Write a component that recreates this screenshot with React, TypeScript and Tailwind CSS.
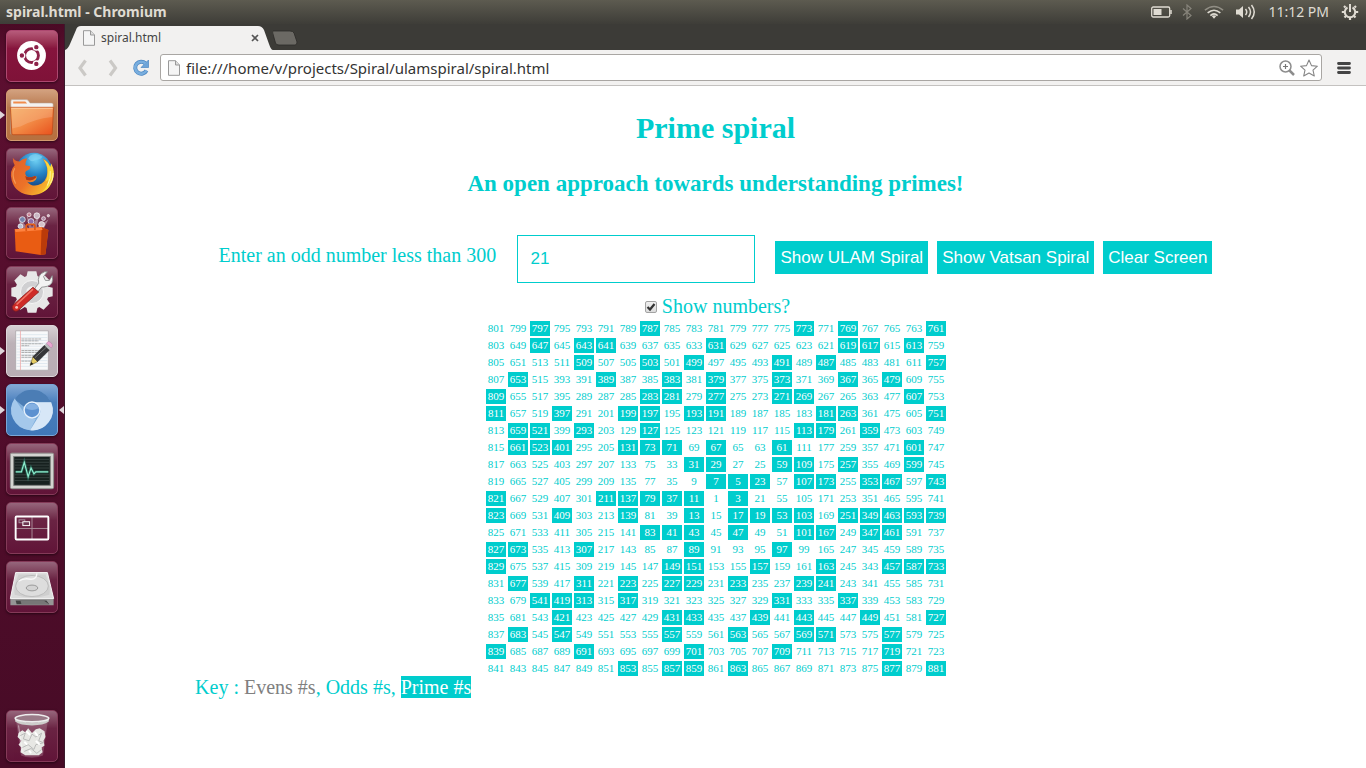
import { useState } from "react";
import type { ReactNode } from "react";

/* ---------- spiral data ---------- */

function isPrime(n: number): boolean {
  if (n < 2) return false;
  for (let d = 2; d * d <= n; d++) {
    if (n % d === 0) return false;
  }
  return true;
}

// Walks right, up, left, down from the centre, writing 1, 3, 5, ...
function buildSpiral(size: number): number[][] {
  const grid: number[][] = Array.from({ length: size }, () => Array<number>(size).fill(0));
  const steps = [[0, 1], [-1, 0], [0, -1], [1, 0]];
  let row = Math.floor(size / 2);
  let col = row;
  let value = 1;
  let dir = 0;
  let run = 1;
  grid[row][col] = value;
  while (value < 2 * size * size - 1) {
    for (let leg = 0; leg < 2; leg++) {
      for (let i = 0; i < run; i++) {
        row += steps[dir][0];
        col += steps[dir][1];
        value += 2;
        if (grid[row] && col >= 0 && col < size) grid[row][col] = value;
      }
      dir = (dir + 1) % 4;
    }
    run++;
  }
  return grid;
}

/* ---------- launcher icons ---------- */

function UbuntuIcon() {
  return (
    <svg viewBox="0 0 52 52" className="size-full">
      <circle cx="25.500" cy="25.500" r="15" fill="#fff" />
      <circle cx="25.500" cy="25.500" r="7.200" fill="none" stroke="#8d2249" strokeWidth="3" />
      <g fill="#8d2249" stroke="#fff" strokeWidth="1.400">
        <circle cx="15.500" cy="25.500" r="3" />
        <circle cx="30.500" cy="16.800" r="3" />
        <circle cx="30.500" cy="34.200" r="3" />
      </g>
    </svg>
  );
}

function FilesIcon() {
  return (
    <svg viewBox="0 0 52 52" className="size-full">
      <defs>
        <linearGradient id="folder" x1="0" y1="0" x2="1" y2="1">
          <stop offset="0" stopColor="#f5a95c" />
          <stop offset="0.5" stopColor="#f28a45" />
          <stop offset="1" stopColor="#e8501c" />
        </linearGradient>
      </defs>
      <path d="M4 46 L4 11.500 Q4 10 5.500 10 L20 10 Q21.500 10 22.500 11.500 L24 13.500 L46 13.500 Q48 13.500 48 15 L48 20 L4 20Z" fill="#f4f2f0" stroke="#b5a08e" strokeWidth=".6" />
      <path d="M6.500 12 H19 L21 14 H6.500Z" fill="#f08b4b" />
      <path d="M3.500 18 H48.500 L47 45 Q47 46.500 45 46.500 H7 Q5 46.500 5 45Z" fill="url(#folder)" stroke="#bd4a1a" strokeWidth=".8" />
      <path d="M4.500 19 H47.500 L47 28 Q28 30 14 38 L5.500 40Z" fill="#fff" opacity=".16" />
      <path d="M4.500 19 H47.500" stroke="#ffd0a3" strokeWidth="1" />
    </svg>
  );
}

function FirefoxIcon() {
  return (
    <svg viewBox="0 0 52 52" className="size-full">
      <defs>
        <radialGradient id="globe" cx=".55" cy=".2" r=".8">
          <stop offset="0" stopColor="#6fd0f3" />
          <stop offset=".5" stopColor="#2482c5" />
          <stop offset="1" stopColor="#123a78" />
        </radialGradient>
        <linearGradient id="fox" x1="0" y1="0" x2="1" y2=".7">
          <stop offset="0" stopColor="#e0602a" />
          <stop offset=".55" stopColor="#ec7228" />
          <stop offset="1" stopColor="#f9c22e" />
        </linearGradient>
      </defs>
      <circle cx="28" cy="23" r="19" fill="url(#globe)" />
      <path d="M24 7 Q30 3 37 8 Q34 12 30 11 Q26 15 22 10Z" fill="#8edbf5" opacity=".55" />
      <path d="M6 9 Q9 13 13 13 Q17 9 21 10 Q19 14 19 17 L24 18 Q25 21 20 23 Q18 25 20 28 Q23 31 29 28 Q32 28 30 32 Q26 36 21 34 Q27 41 36 36 Q43 31 42 20 Q40 14 37 10 Q43 13 45 19 L46 16 Q50 24 47 33 Q42 47 26 48 Q9 47 5 33 Q2 23 8 17 Q6 13 6 9Z" fill="url(#fox)" />
      <path d="M45 19 L46 15 Q51 24 47 34 Q43 43 36 45 Q42 40 43 32 L40 34 Q43 28 42 20 Q41 15 38 11 Q43 14 45 19Z" fill="#fbd93d" />
      <path d="M45 23 Q46 31 42 38 M48 25 Q48 32 45 36" fill="none" stroke="#fff6a8" strokeWidth="1" />
      <path d="M19 28 Q23 31 29 28 Q31 28 30 30 Q26 34 20 32Z" fill="#a93c1c" />
      <path d="M8 20 Q4 27 9 36" fill="none" stroke="#f49a55" strokeWidth="1.200" />
    </svg>
  );
}

function SoftwareIcon() {
  return (
    <svg viewBox="0 0 52 52" className="size-full">
      <path d="M12 10 L23 22 L20 5 L26 20 L34 4 L31 20 L43 12 L37 24 H15Z" fill="#fff" opacity=".38" />
      <g stroke="#fff" strokeWidth=".7">
        <circle cx="16" cy="12" r="3" fill="#7785ad" /><circle cx="23" cy="7" r="2" fill="#c88193" />
        <circle cx="31" cy="8" r="3" fill="#c9b6c3" /><circle cx="38" cy="11" r="2" fill="#b28aa5" />
        <circle cx="25" cy="14" r="3" fill="#8d6eaa" /><circle cx="36" cy="17" r="3" fill="#d4c2ca" />
        <circle cx="43" cy="8" r="1.200" fill="#d8bac5" /><circle cx="14" cy="19" r="2.500" fill="#b8c0d4" />
      </g>
      <path d="M8 22 L36 20 L43 23 L40 48 L35 49 L9 45Z" fill="#e95c13" />
      <path d="M36 20 L43 23 L40 48 L35 49Z" fill="#ba3b0a" />
      <path d="M8 22 L36 20 L37 23 L9 25Z" fill="#ff8340" />
      <path d="M20 24 V19 Q20 17 22 17 H27 Q29 17 29 19 V23" fill="none" stroke="#df5a16" strokeWidth="1.800" />
    </svg>
  );
}

function SettingsIcon() {
  return (
    <svg viewBox="0 0 52 52" className="size-full">
      <g fill="#e7e7e7">
        <circle cx="26" cy="26" r="17.500" />
        {[0, 45, 90, 135, 180, 225, 270, 315].map((angle) => (
          <path key={angle} d="M20 11 L21.500 4.500 H30.500 L32 11Z" transform={`rotate(${angle} 26 26)`} />
        ))}
      </g>
      <circle cx="26" cy="26" r="12" fill="#d0d0d2" stroke="#f6f6f6" strokeWidth="1" />
      <circle cx="26" cy="26" r="6" fill="#f2f2f2" />
      <path d="M29 22 L33 17 Q31 8 39 5 L42 5 L38 10 L40 14 L44 14 L47 9 Q49 18 42 20 Q38 21 36 21 L31 27Z" fill="#f3f3f3" stroke="#898b8b" strokeWidth=".9" />
      <path d="M27 21 L33 26 L13 44 Q9 48 6 44 Q4 41 8 38Z" fill="#cf2b27" stroke="#85201e" strokeWidth=".8" />
      <path d="M27 23 L10 39" stroke="#f27868" strokeWidth="1.600" />
      <circle cx="10" cy="42" r="1.500" fill="#f6c2bd" />
    </svg>
  );
}

function EditorIcon() {
  return (
    <svg viewBox="0 0 52 52" className="size-full">
      <path d="M9 5 H43 V46 H9Z" fill="#f8f9fa" stroke="#aaa5a9" strokeWidth=".8" />
      <path d="M10 9H42 M10 12H42 M10 15H42 M10 18H42 M10 21H42 M10 24H42 M10 27H42 M10 30H42 M10 33H42 M10 36H42 M10 39H42 M10 42H42" stroke="#cfdde8" strokeWidth=".6" />
      <path d="M14 5V46" stroke="#eda8a8" strokeWidth=".8" />
      <path d="M15 13.500H36 M15 15.500H33 M15 18.500H37 M15 20.500H23 M15 25.500H35 M15 27.500H32 M15 30.500H31 M15 32.500H28 M15 36.500H27" stroke="#8a8a8a" strokeWidth=".7" strokeDasharray="3 .5" />
      <path d="M24 41 L27 32 L32 37Z" fill="#e5cd65" stroke="#65551f" strokeWidth=".6" />
      <path d="M24 41 L25 37.500 L27.500 39.500Z" fill="#1c1c1c" />
      <path d="M27 32 L39 20 L44 25 L32 37Z" fill="#353638" stroke="#171717" strokeWidth=".6" />
      <path d="M29 33 L41 22" stroke="#777" strokeWidth="1" />
      <path d="M39 20 L41 18 L46 23 L44 25Z" fill="#b9bdbd" />
      <path d="M41 18 L43 16 Q45 16 47 19 Q48 21 46 23Z" fill="#e9a5d0" stroke="#b67fa7" strokeWidth=".6" />
    </svg>
  );
}

function ChromiumIcon() {
  return (
    <svg viewBox="0 0 52 52" className="size-full">
      <circle cx="26" cy="26" r="21" fill="#7fadda" />
      <path d="M8 15 A21 21 0 0 1 44 15 L47 18 H26 A9 9 0 0 0 18 23Z" fill="#4b7db5" />
      <path d="M8 14 A21 21 0 0 0 24 47 L30 35 Q23 36 19 31Z" fill="#a4c8eb" />
      <path d="M46 18 H28 Q37 22 34 31 L24 47 A21 21 0 0 0 46 18Z" fill="#d7e7f7" />
      <circle cx="26" cy="26" r="9" fill="#e6f1fc" />
      <circle cx="26" cy="26" r="7.500" fill="#5c91d0" />
      <path d="M19 24 A7.500 7.500 0 0 1 33 24 Q26 28 19 24Z" fill="#84b0e2" />
    </svg>
  );
}

function MonitorIcon() {
  return (
    <svg viewBox="0 0 52 52" className="size-full">
      <rect x="3.500" y="9.500" width="45" height="37" rx="1.500" fill="#d3d4d0" stroke="#91938f" />
      <rect x="7" y="13" width="38" height="30" fill="#17211f" stroke="#7d817e" />
      <path d="M8 16H44 M8 19H44 M8 22H44 M8 25H44 M8 32H44 M8 35H44 M8 38H44" stroke="#3f4b48" strokeWidth=".8" />
      <path d="M9 29 H15 L18 19 L22 34 L25 25 L28 31 L30 29 H43" fill="none" stroke="#2f8d76" strokeWidth="3" opacity=".5" />
      <path d="M9 29 H15 L18 19 L22 34 L25 25 L28 31 L30 29 H43" fill="none" stroke="#8ff0d0" strokeWidth="1.200" />
    </svg>
  );
}

function WorkspaceIcon() {
  return (
    <svg viewBox="0 0 52 52" className="size-full">
      <path d="M26 14 V38 M9 26.500 H43" stroke="#aa8a98" strokeWidth="1" />
      <rect x="9" y="14" width="34" height="24" rx="1" fill="none" stroke="#fff" strokeWidth="2" />
      <rect x="12.500" y="17.500" width="6" height="3" fill="none" stroke="#a991a0" />
      <rect x="16.500" y="19.500" width="7" height="4" fill="#6d3752" stroke="#fff" />
    </svg>
  );
}

function DiskIcon() {
  return (
    <svg viewBox="0 0 52 52" className="size-full">
      <path d="M9 11 H42 L48.500 38 H3.500Z" fill="#dcdcdc" stroke="#f8f8f8" strokeWidth="1" />
      <path d="M12 13 H40 Q46 27 44 34 Q26 40 8 34 Q6 27 12 13Z" fill="#cfcfcf" />
      <ellipse cx="26" cy="25" rx="17" ry="11" fill="#dddddd" stroke="#b5b5b5" strokeWidth=".8" />
      <ellipse cx="26" cy="27" rx="6" ry="3" fill="#d3d3d3" stroke="#888" strokeWidth=".8" />
      <path d="M12 20 Q18 16 25 18 Q31 18 31 12" fill="none" stroke="#f8f8f8" strokeWidth="1.500" />
      <path d="M3.500 38 H48.500 V45 H3.500Z" fill="#969696" />
      <path d="M9 40 H41 L44 44 H10Z" fill="#444" />
      <path d="M14 40 H38 L44 44 H15Z" fill="#777" />
      <path d="M3.500 38 H48.500" stroke="#fff" strokeWidth=".8" />
    </svg>
  );
}

function TrashIcon() {
  return (
    <svg viewBox="0 0 52 52" className="size-full">
      <path d="M10 10 L15 46 Q26 50 37 46 L42 10Z" fill="#d9bcc8" opacity=".28" stroke="#d5bbc5" strokeWidth=".8" />
      <path d="M12 23 L16 20 L19 22 L22 18 L26 23 L30 19 L34 18 L39 21 L40 27 L38 31 L39 36 L36 38 L37 43 L33 46 H19 L14 43 L15 38 L12 35 L15 31 L11 27Z" fill="#e7e7e4" />
      <path d="M13 26 L19 23 L17 29 L23 31 L26 24 L30 27 L36 23 L33 31 L38 33 L30 35 L28 40 L22 35 L16 38 M18 42 L25 39 L31 44 L36 40" fill="none" stroke="#b7b8b7" strokeWidth="1" />
      <path d="M20 21 L24 25 M29 22 L32 26 M18 32 L21 35 M30 31 L34 35 M23 41 L25 44" stroke="#fff" strokeWidth="2" />
      <ellipse cx="26" cy="8" rx="17" ry="4" fill="#9a7b88" />
      <path d="M8.500 7 V11 Q14 15 26 15 Q38 15 43.500 11 V7 Q38 12 26 12 Q14 12 8.500 7Z" fill="#cdcdcb" />
      <ellipse cx="26" cy="7.500" rx="17.500" ry="3.800" fill="none" stroke="#ededed" strokeWidth="1.600" />
      <path d="M12 15 L16 43" stroke="#fff" strokeWidth="1" opacity=".5" />
    </svg>
  );
}

interface LauncherEntry {
  name: string;
  tint: string;
  icon: ReactNode;
  running?: boolean;
  focused?: boolean;
}

const plum = "bg-linear-to-b from-[#96667c] via-[#6a2343] via-35% to-[#611438] border-[#843a58]";

const launcherEntries: LauncherEntry[] = [
  { name: "Dash home", tint: "bg-linear-to-b from-[#b75b7b] via-[#86143d] via-35% to-[#7f1238] border-[#ad4870]", icon: <UbuntuIcon /> },
  { name: "Files", tint: "bg-linear-to-b from-[#d2a17f] via-[#b8794e] via-35% to-[#b7703f] border-[#d49b70]", icon: <FilesIcon />, running: true },
  { name: "Firefox", tint: plum, icon: <FirefoxIcon /> },
  { name: "Software Centre", tint: plum, icon: <SoftwareIcon /> },
  { name: "System Settings", tint: plum, icon: <SettingsIcon /> },
  { name: "Text Editor", tint: "bg-linear-to-b from-[#d8d0d4] via-[#bcb1b7] via-35% to-[#b9adb4] border-[#ddd5d9]", icon: <EditorIcon />, running: true },
  { name: "Chromium", tint: "bg-linear-to-b from-[#84a9d5] via-[#497fbd] via-35% to-[#4077b8] border-[#79a6d8]", icon: <ChromiumIcon />, running: true, focused: true },
  { name: "System Monitor", tint: plum, icon: <MonitorIcon /> },
  { name: "Workspace Switcher", tint: plum, icon: <WorkspaceIcon /> },
  { name: "Disk", tint: plum, icon: <DiskIcon /> },
];

function LauncherItem({ entry }: { entry: LauncherEntry }) {
  return (
    <div className="relative flex w-full justify-center">
      {entry.running && (
        <svg viewBox="0 0 5 8" className="absolute top-[22px] left-0 h-2 w-[5px]"><path d="M0 0 L5 4 L0 8Z" fill="#ded5da" /></svg>
      )}
      <button type="button" aria-label={entry.name} className={`size-[52px] overflow-hidden rounded-[5px] border shadow-sm shadow-black/40 ${entry.tint}`}>
        {entry.icon}
      </button>
      {entry.focused && (
        <svg viewBox="0 0 5 8" className="absolute top-[22px] right-0 h-2 w-[5px]"><path d="M5 0 L0 4 L5 8Z" fill="#ded5da" /></svg>
      )}
    </div>
  );
}

/* ---------- desktop chrome ---------- */

function TopPanel() {
  return (
    <header className="flex h-6 items-center justify-between bg-linear-to-b from-[#5d5b50] to-[#3e3d38] pr-[7px] pl-[6px] text-[#dfdbd2]">
      <span className="text-[14px] leading-6 font-bold">spiral.html - Chromium</span>
      <div className="flex items-center gap-[9px]">
        <svg viewBox="0 0 22 12" className="h-3 w-[22px]">
          <rect x=".7" y="1" width="18" height="10" rx="1.500" fill="none" stroke="#dfdbd2" strokeWidth="1.300" />
          <rect x="2.500" y="3" width="8" height="6" fill="#dfdbd2" />
          <path d="M20 4V8" stroke="#dfdbd2" strokeWidth="1.500" />
        </svg>
        <svg viewBox="0 0 10 16" className="h-4 w-[10px]">
          <path d="M1 4.500 L9 11.500 L5 15 V1 L9 4.500 L1 11.500" fill="none" stroke="#87847b" strokeWidth="1.200" />
        </svg>
        <svg viewBox="0 0 22 16" className="ml-[3px] h-4 w-[20px]">
          <g fill="none" strokeWidth="1.700">
            <path d="M1 6 Q11 -2 21 6" stroke="#918e85" />
            <path d="M4 9 Q11 3 18 9 M7 12 Q11 8 15 12" stroke="#dfdbd2" />
          </g>
          <path d="M8.500 12.500 Q11 10.500 13.500 12.500 L11 15.500Z" fill="#dfdbd2" />
        </svg>
        <svg viewBox="0 0 20 16" className="ml-[3px] h-4 w-[20px]">
          <path d="M0 5.500 H3 L7 2 V14 L3 10.500 H0Z" fill="#dfdbd2" />
          <path d="M9.500 5 Q12 8 9.500 11 M12.500 3 Q16.500 8 12.500 13 M15.500 1 Q21 8 15.500 15" fill="none" stroke="#dfdbd2" strokeWidth="1.500" />
        </svg>
        <time className="ml-[3px] text-[14px] leading-6">11:12 PM</time>
        <svg viewBox="0 0 18 18" className="ml-[3px] size-[18px]">
          <g stroke="#dfdbd2" fill="none">
            <path d="M6.500 4.500 A5.200 5.200 0 1 0 11.500 4.500" strokeWidth="2" />
            <path d="M9 1V9" strokeWidth="2" />
            <path d="M4.500 4.500 L3 3 M13.500 4.500 L15 3 M3.500 9 H.8 M14.500 9 H17.200 M5 13 L3.500 14.500 M13 13 L14.500 14.500 M9 14V17" strokeWidth="2.200" />
          </g>
        </svg>
      </div>
    </header>
  );
}

function PageIcon() {
  return (
    <svg viewBox="0 0 14 16" className="h-4 w-[14px] shrink-0">
      <path d="M1.500 .7 H8.500 L12.500 5 V15.300 H1.500Z" fill="#f5f5f5" stroke="#999" strokeWidth="1" />
      <path d="M8.500 .7 V5 H12.500" fill="#ddd" stroke="#999" strokeWidth="1" />
    </svg>
  );
}

function TabStrip() {
  return (
    <div className="flex h-[26px] items-end bg-[#3c3b37]">
      <div className="relative h-6 w-[208px]">
        <svg viewBox="0 0 208 24" preserveAspectRatio="none" className="absolute inset-0 size-full">
          <path d="M0 24 Q3 23 5 18 L11 4 Q12 0 16 0 H193 Q197 0 199 4 L204 18 Q206 24 208 24Z" fill="#f2f1f0" />
        </svg>
        <div className="relative flex h-full items-center gap-[5px] pr-[10px] pl-[17px]">
          <PageIcon />
          <span className="grow text-[12px] leading-6 text-[#444]">spiral.html</span>
          <button type="button" aria-label="Close tab" className="flex size-4 items-center justify-center">
            <svg viewBox="0 0 8 8" className="size-2"><path d="M1 1 L7 7 M7 1 L1 7" stroke="#555" strokeWidth="1.700" /></svg>
          </button>
        </div>
      </div>
      <button type="button" aria-label="New tab" className="mb-1 h-4 w-[26px]">
        <svg viewBox="0 0 26 16" className="h-4 w-[26px]">
          <path d="M0 1 H17 Q20 1 21 3 L24 12 Q24 15 22 15 H6 Q3 15 2.500 13 L-.3 3 Q-.5 1 0 1Z" fill="#6b6964" stroke="#2c2b28" strokeWidth=".8" />
        </svg>
      </button>
    </div>
  );
}

function Toolbar() {
  const [address, setAddress] = useState("file:///home/v/projects/Spiral/ulamspiral/spiral.html");
  return (
    <div className="flex h-9 items-center border-b border-[#c4c2c0] bg-[#f2f1f0] pr-3 pl-2">
      <button type="button" aria-label="Back" className="mr-[10px] size-5">
        <svg viewBox="0 0 20 20" className="size-5"><path d="M12.500 2.500 L7 10 L12.500 17.500" fill="none" stroke="#cbc9c6" strokeWidth="3.200" /></svg>
      </button>
      <button type="button" aria-label="Forward" className="mr-[8px] size-5">
        <svg viewBox="0 0 20 20" className="size-5"><path d="M7 2.500 L12.500 10 L7 17.500" fill="none" stroke="#cbc9c6" strokeWidth="3.200" /></svg>
      </button>
      <button type="button" aria-label="Reload" className="mr-[9px] size-5">
        <svg viewBox="0 0 20 20" className="size-5">
          <path d="M14.500 5.500 A6 6 0 1 0 15.500 12.500" fill="none" stroke="#4c87c2" strokeWidth="4" />
          <path d="M17.500 2 V9.500 H10Z" fill="#6da4d8" stroke="#4c87c2" strokeWidth=".7" />
          <path d="M14.500 5.500 A6 6 0 1 0 15.500 12.500" fill="none" stroke="#79aede" strokeWidth="2.600" />
        </svg>
      </button>
      <div className="flex h-[27px] min-w-0 grow items-center rounded-[3px] border border-[#a9a6a3] bg-white pr-[3px] pl-[6px]">
        <PageIcon />
        <input
          aria-label="Address"
          value={address}
          onChange={(e) => setAddress(e.target.value)}
          className="ml-[5px] min-w-0 grow bg-transparent text-[15px] leading-6 text-[#333] outline-none"
        />
        <svg viewBox="0 0 16 16" className="mr-[5px] size-4 shrink-0">
          <circle cx="6.500" cy="6.500" r="5.500" fill="none" stroke="#8d8d8d" strokeWidth="1.500" />
          <path d="M6.500 4 V9 M4 6.500 H9" stroke="#777" strokeWidth="1.200" />
          <path d="M10.500 10.500 L15 15" stroke="#8d8d8d" strokeWidth="2.500" />
        </svg>
        <svg viewBox="0 0 18 18" className="size-[18px] shrink-0">
          <path d="M9 1 L11.500 6.600 L17.400 7.200 L13 11.200 L14.300 17 L9 14 L3.700 17 L5 11.200 L.6 7.200 L6.500 6.600Z" fill="#fff" stroke="#858585" strokeWidth="1.100" strokeLinejoin="round" />
        </svg>
      </div>
      <button type="button" aria-label="Menu" className="ml-3 flex size-5 items-center justify-center">
        <svg viewBox="0 0 14 14" className="size-[14px]"><path d="M1.500 2.500 H12.500 M1.500 7 H12.500 M1.500 11.500 H12.500" stroke="#444" strokeWidth="2.800" strokeLinecap="round" /></svg>
      </button>
    </div>
  );
}

/* ---------- page ---------- */

function SpiralTable({ grid, showNumbers }: { grid: number[][]; showNumbers: boolean }) {
  return (
    <div className="flex justify-center pl-px">
      <table className="table-fixed border-separate border-spacing-[2px] text-center text-[11px] leading-[15px]">
        <tbody>
          {grid.map((row, r) => (
            <tr key={r}>
              {row.map((n) => (
                <td key={n} className={isPrime(n) ? "h-[15px] w-5 min-w-5 bg-[#00cdcd] p-0 text-white" : "h-[15px] w-5 min-w-5 p-0"}>
                  {showNumbers ? n : ""}
                </td>
              ))}
            </tr>
          ))}
        </tbody>
      </table>
    </div>
  );
}

const actionButton = "h-[33px] bg-[#00cdcd] px-[5px] text-white whitespace-nowrap";

function SpiralPage() {
  const [size, setSize] = useState("21");
  const [showNumbers, setShowNumbers] = useState(true);
  const [grid, setGrid] = useState<number[][]>(() => buildSpiral(21));

  const draw = () => {
    const n = Number(size);
    if (n % 2 === 1 && n > 0 && n < 300) setGrid(buildSpiral(n));
  };

  return (
    <main className="grow bg-white font-['Liberation_Serif',serif] text-[20px] text-[#00cdcd]">
      <div className="mx-auto w-4/5">
        <h1 className="pt-6 text-center text-[30px] leading-9 font-bold">Prime spiral</h1>
        <h2 className="pt-6 text-center text-[23px] leading-7 font-bold">An open approach towards understanding primes!</h2>
        <div className="mt-[37px] flex items-center justify-center">
          <label htmlFor="size" className="mr-[18px] w-[281px] pb-2 leading-6 whitespace-nowrap">Enter an odd number less than 300</label>
          <input
            id="size"
            value={size}
            onChange={(e) => setSize(e.target.value)}
            className="h-12 w-[238px] border border-[#00cdcd] px-3 font-['Liberation_Sans',sans-serif] text-[17px] outline-none"
          />
          <div className="ml-5 flex gap-[9px] pb-[3px] font-['Liberation_Sans',sans-serif] text-[17px]">
            <button type="button" onClick={draw} className={actionButton}>Show ULAM Spiral</button>
            <button type="button" onClick={draw} className={actionButton}>Show Vatsan Spiral</button>
            <button type="button" onClick={() => setGrid([])} className={actionButton}>Clear Screen</button>
          </div>
        </div>
        <label className="mt-3 flex items-center justify-center gap-[5px] pl-1 leading-[22px]">
          <span className="mt-[2px] grid size-3 place-items-center">
            <input
              type="checkbox"
              checked={showNumbers}
              onChange={(e) => setShowNumbers(e.target.checked)}
              className="peer col-start-1 row-start-1 size-3 appearance-none rounded-[2px] border border-[#a3a3a3] bg-linear-to-b from-[#f0f0f0] to-[#dcdcdc]"
            />
            <svg viewBox="0 0 10 10" className="pointer-events-none invisible col-start-1 row-start-1 size-[10px] peer-checked:visible">
              <path d="M1.500 5 L4 7.500 L8.500 2" fill="none" stroke="#333" strokeWidth="2.200" />
            </svg>
          </span>
          Show numbers?
        </label>
        <div className="pt-[2px]">
          <SpiralTable grid={grid} showNumbers={showNumbers} />
        </div>
        <p className="leading-[18px]">
          Key : <span className="text-[#808080]">Evens #s</span>, Odds #s, <span className="bg-[#00cdcd] text-white">Prime #s</span>
        </p>
      </div>
    </main>
  );
}

export default function App() {
  return (
    <div className="flex min-h-screen flex-col bg-white font-['Noto_Sans',sans-serif]">
      <TopPanel />
      <div className="flex grow">
        <nav aria-label="Launcher" className="flex w-[65px] shrink-0 flex-col gap-[7px] border-r border-[#3a1a2c] bg-linear-to-b from-[#4a0a25] via-[#5c0f30] via-5% to-[#470b26] pt-[6px] pb-[6px]">
          {launcherEntries.map((entry) => (
            <LauncherItem key={entry.name} entry={entry} />
          ))}
          <div className="mt-auto">
            <LauncherItem entry={{ name: "Trash", tint: plum, icon: <TrashIcon /> }} />
          </div>
        </nav>
        <div className="flex min-w-0 grow flex-col">
          <TabStrip />
          <Toolbar />
          <SpiralPage />
        </div>
      </div>
    </div>
  );
}
